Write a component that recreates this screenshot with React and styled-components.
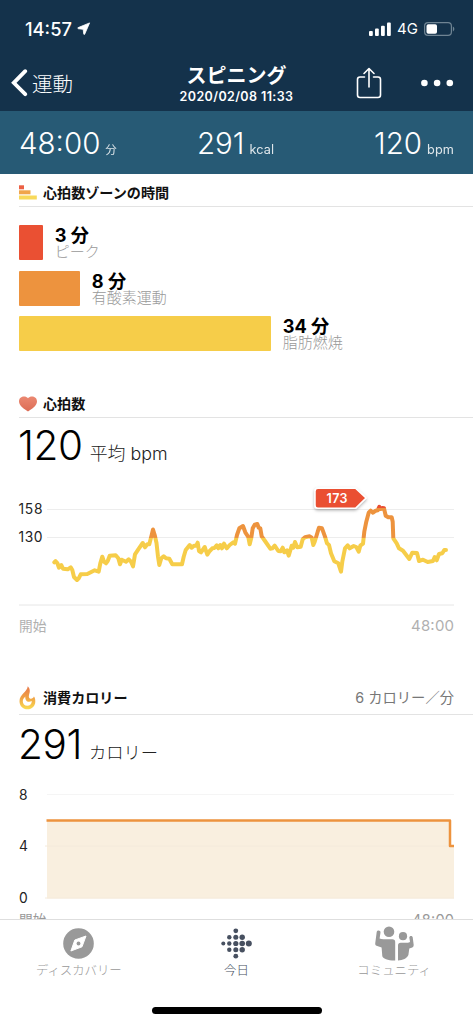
import React from "react";
import styled, { createGlobalStyle } from "styled-components";

const GlobalStyle = createGlobalStyle`
  * {
    box-sizing: border-box;
  }
  body {
    margin: 0;
    background: #fff;
    font-family: Inter, "Noto Sans CJK JP", sans-serif;
  }
`;

const Screen = styled.div`
  display: flex;
  flex-direction: column;
  width: 473px;
  height: 1024px;
  overflow: hidden;
  background: #fff;
`;

const StatusBar = styled.div`
  display: flex;
  align-items: center;
  justify-content: space-between;
  height: 58px;
  padding: 0 18px 0 25px;
  background: #14324b;
  color: #fff;
`;

const Clock = styled.div`
  display: flex;
  align-items: center;
  gap: 5px;
  font-size: 18.3px;
  font-weight: 500;
  line-height: 20px;
`;

const Signals = styled.div`
  display: flex;
  align-items: center;
  gap: 6px;
  font-size: 15px;
  font-weight: 400;
  line-height: 20px;
`;

const NavBar = styled.div`
  display: grid;
  grid-template-columns: 1fr 150px 1fr;
  height: 53px;
  padding: 0 19px 0 11px;
  background: #14324b;
  color: #fff;
`;

const Back = styled.div`
  display: flex;
  align-items: center;
  gap: 4px;
  height: 50px;
  font-size: 20.5px;
  font-weight: 300;
`;

const TitleBlock = styled.div`
  padding-left: 8px;
  text-align: center;
  white-space: nowrap;
`;

const Title = styled.div`
  padding-top: 6px;
  font-size: 20px;
  font-weight: 700;
  line-height: 25px;
`;

const Subtitle = styled.div`
  font-size: 12.5px;
  font-weight: 600;
  letter-spacing: 0.4px;
  line-height: 16px;
`;

const Actions = styled.div`
  display: flex;
  align-items: center;
  justify-content: flex-end;
  gap: 39px;
  height: 50px;
`;

const Stats = styled.div`
  display: grid;
  grid-template-columns: 178px 1fr auto;
  height: 63px;
  padding: 12px 19px 0;
  background: #275a75;
  color: #fff;
`;

const Stat = styled.div`
  display: flex;
  align-items: baseline;
  gap: 5px;
  font-size: 29.5px;
  font-weight: 350;
  line-height: 40px;
  small {
    font-size: ${(p) => p.$unitSize || 12.7}px;
    font-weight: 400;
    letter-spacing: 0.1px;
    opacity: 0.85;
  }
`;

const Content = styled.div`
  flex: 1;
  min-height: 0;
  overflow: hidden;
`;

const Section = styled.section`
  height: ${(p) => p.$height}px;
`;

const SectionHeader = styled.div`
  display: flex;
  align-items: center;
  height: ${(p) => p.$height}px;
  margin-left: 19px;
  padding: ${(p) => p.$offset || 0}px 19px 0 0;
  border-bottom: 1px solid #e3e3e3;
`;

const SectionIcon = styled.div`
  display: flex;
  width: 24px;
`;

const SectionTitle = styled.div`
  flex: 1;
  color: #111;
  font-size: 14.1px;
  font-weight: 700;
  line-height: 20px;
`;

const SectionNote = styled.div`
  color: #777;
  font-size: 14.3px;
  line-height: 20px;
`;

const Zones = styled.div`
  display: flex;
  flex-direction: column;
  gap: 10.5px;
  padding: 18px 19px 0;
`;

const Zone = styled.div`
  display: flex;
  gap: 11.5px;
  height: 35px;
`;

const ZoneBar = styled.div`
  border-radius: 1px;
`;

const ZoneMinutes = styled.div`
  color: #000;
  font-size: 18.2px;
  font-weight: 700;
  line-height: 18px;
  padding-top: 1px;
`;

const ZoneName = styled.div`
  color: #999;
  font-size: 15px;
  font-weight: 300;
  line-height: 16px;
`;

const Summary = styled.div`
  display: flex;
  align-items: baseline;
  gap: 7px;
  height: ${(p) => p.$height}px;
  padding: ${(p) => p.$offset}px 0 0 18px;
  color: #000;
  font-size: 40.5px;
  font-weight: 300;
  letter-spacing: -0.4px;
  line-height: 56px;
  span {
    color: #222;
    font-size: ${(p) => p.$unitSize}px;
    font-weight: 300;
    letter-spacing: 0;
  }
`;

const ChartSvg = styled.svg`
  display: block;
  font-family: Inter, "Noto Sans CJK JP", sans-serif;
`;

const TabBar = styled.nav`
  display: grid;
  grid-template-columns: repeat(3, 1fr);
  height: 86px;
  border-top: 1px solid #dedede;
`;

const Tab = styled.div`
  display: flex;
  flex-direction: column;
  align-items: center;
  padding-top: 5px;
  color: ${(p) => (p.$active ? "#475060" : "#999")};
  font-size: 12.4px;
  font-weight: 300;
  line-height: 18px;
`;

const TabIcon = styled.div`
  display: flex;
  align-items: center;
  height: 37px;
`;

const HomeArea = styled.div`
  display: flex;
  justify-content: center;
  height: 19px;
  padding-top: 2px;
`;

const HomeIndicator = styled.div`
  width: 170px;
  height: 7px;
  border-radius: 4px;
  background: #000;
`;

const ZONES = [
  { minutes: 3, name: "ピーク", width: 24.3, color: "#ea5033" },
  { minutes: 8, name: "有酸素運動", width: 61.3, color: "#ed933e" },
  { minutes: 34, name: "脂肪燃焼", width: 252.2, color: "#f6cd49" },
];

const HEART_RATE = [
  "54.3,77.3 55.5,76 57.3,78 59,82.7 61.3,80 63,83.7 67.7,84.3 70.7,82.3",
  "72.3,85 74,92 77,95 78.7,93.3 80.7,89.3 87.3,89 94.7,85.3 98.7,86.7",
  "100.3,78.3 102.3,71.7 104,76.7 106,78.3 107.7,76 109.7,70.7 115.7,70.3",
  "118.3,73.3 120,79.3 121.7,74.7 126,76.7 128.7,74.3 131,76.7 133,81.3",
  "135,69.3 138.3,64.3 142.7,58 145,62.3 147.3,59.3 149.3,59.3 151.7,50",
  "153,44.5 154.7,50 156.5,58 158,71.7 159.3,80 161.3,73.3 163.7,71.3",
  "166,73.3 169.3,73.7 172.3,79.3 182,79.3 183.7,71.7 185.7,65 189.7,60",
  "191.7,62.7 194,60.7 196.3,60.7 197.7,57.7 199,66 201,67.3 204.7,62",
  "207.3,69.7 209.7,66 212.3,63.3 214.3,63 216.7,60.3 218.3,63.3 220.3,60",
  "222,63.3 224,58.7 226.7,63.3 229.7,60 233.3,57.3 235,58.7 237,50",
  "239.3,43.3 243,41 245.3,47.3 248.3,52 249.7,59.3 251.3,52.7 252.7,43.3",
  "254.7,39.7 257.3,39 258.7,42.7 260.3,43.3 261.7,51.3 265,56 270.3,63.7",
  "272.3,63.3 274.7,60.7 278.3,66 280.7,66.3 282.7,62.7 284.3,67.3 287,65.3",
  "288.7,70.7 291.7,60.7 293.3,62.7 295,57 297.3,62.3 300.7,61.7 302.7,54.3",
  "305,52.3 309.7,51.3 311.7,52.7 313.3,60 314.7,56.7 317.7,46.7 319,42.7",
  "322,43.3 325,51.7 327,58.3 329,60 331,68.3 334.3,76.3 338.3,78.3 341,86.7",
  "342.3,76.7 345,63.3 347.7,60.3 349.7,63.3 353.7,61 356.3,62 358.7,66.7",
  "360.3,60.7 363,58.7 364.3,46.7 366.3,36.7 368.7,27.7 370.7,25.7 373,27.7",
  "375.7,25.7 377.7,25.3 379.3,21.8 380.7,24 382.3,22.9 384,23.3 385.7,30.7",
  "388.3,32.3 391.7,32.3 392.7,36.7 393.3,53.3 396.7,58.3 399,63.3 403,65.7",
  "409.3,74 412.3,67.7 417,68 419,76 423,74.7 427.7,77 433,76 434.7,72",
  "436.7,75.3 439,69 442.3,68.3 444.3,65 446,65",
].join(" ");

// [cx, cy, r], the dots grow towards the right
const LOGO_DOTS = [
  [2.3, 15.5, 2],
  [8.3, 9.2, 2.2],
  [8.3, 15.5, 2.2],
  [8.3, 21.8, 2.2],
  [14.8, 2.8, 2.4],
  [14.8, 9.2, 2.5],
  [14.8, 15.5, 2.6],
  [14.8, 21.8, 2.5],
  [14.8, 28.2, 2.4],
  [21.2, 9.2, 2.7],
  [21.2, 15.5, 2.8],
  [21.2, 21.8, 2.7],
  [27.8, 15.5, 3],
];

const LocationArrow = () => (
  <svg width="14" height="14" viewBox="0 0 14 14">
    <path d="M12.6.9 7.700 12.200Q7 13 6.700 11.900L6.200 7.300 1.300 6.700Q.1 6.200 1.200 5.600z" fill="#fff" stroke="#fff" strokeWidth="0.8" strokeLinejoin="round" />
  </svg>
);

const SignalIcon = () => (
  <svg width="22" height="14" viewBox="0 0 22 14" fill="#fff">
    <rect x="0" y="9" width="3.8" height="5" rx="1" />
    <rect x="6" y="6.5" width="3.8" height="7.5" rx="1" />
    <rect x="12" y="3.8" width="3.8" height="10.2" rx="1" />
    <rect x="18" y="0.5" width="3.8" height="13.5" rx="1" />
  </svg>
);

const BatteryIcon = () => (
  <svg width="31" height="14" viewBox="0 0 31 14">
    <rect x="0.6" y="0.6" width="26.8" height="12.8" rx="3.4" fill="none" stroke="#6f8493" strokeWidth="1.2" />
    <path d="M28.9 4.6c1.9.7 1.9 4.1 0 4.8z" fill="#6f8493" />
    <rect x="2.5" y="2.3" width="10.5" height="9.4" rx="1.8" fill="#fff" />
  </svg>
);

const ChevronIcon = () => (
  <svg width="17" height="28" viewBox="0 0 17 28">
    <path d="M14.2 2.2 2.8 13.8l11.4 11.4" fill="none" stroke="#fff" strokeWidth="3.8" strokeLinecap="round" />
  </svg>
);

const ShareIcon = () => (
  <svg width="26" height="32" viewBox="0 0 26 32" fill="none" stroke="#fff" strokeWidth="1.6" strokeLinecap="round" strokeLinejoin="round">
    <path d="M8.500 10H4Q1.500 10 1.500 12.500V28Q1.500 30.500 4 30.500H22Q24.500 30.500 24.500 28V12.500Q24.500 10 22 10H17.500" />
    <path d="M13 20V1.500M8 6.500 13 1.500l5 5" />
  </svg>
);

const MoreIcon = () => (
  <svg width="33" height="8" viewBox="0 0 33 8" fill="#fff">
    <circle cx="3.400" cy="4" r="3.300" />
    <circle cx="16.100" cy="4" r="3.300" />
    <circle cx="28.800" cy="4" r="3.300" />
  </svg>
);

const ZonesIcon = () => (
  <svg width="18" height="15" viewBox="0 0 18 15">
    <rect y="0.3" width="5" height="4" fill="#ec6044" />
    <rect y="5.3" width="11.5" height="4" fill="#f0a54b" />
    <rect y="10.5" width="17.8" height="4" fill="#f8d95a" />
  </svg>
);

const HeartIcon = () => (
  <svg width="18" height="16" viewBox="0 0 18 16">
    <linearGradient id="heart" x1="0" y1="0" x2="0" y2="1">
      <stop offset="0" stopColor="#eb8871" />
      <stop offset="1" stopColor="#dc6c55" />
    </linearGradient>
    <path d="M9 2.300C6.700-.6 0 0 0 5.500c0 4.400 5.500 7.500 9 10 3.500-2.500 9-5.600 9-10C18 0 11.300-.6 9 2.300z" fill="url(#heart)" />
  </svg>
);

const FlameIcon = () => (
  <svg width="17" height="24" viewBox="0 0 17 24">
    <linearGradient id="flame" x1="0" y1="0" x2="0" y2="1">
      <stop offset="0" stopColor="#e8794b" />
      <stop offset="0.5" stopColor="#f0a244" />
      <stop offset="1" stopColor="#fadd52" />
    </linearGradient>
    <path
      d="M8.800.3C8.200 6 .5 8.500.5 15.200.5 20 4 23.300 8.500 23.300s7.800-3.300 7.800-7.800c0-2.500-.5-4-1.400-5-.5 1.500-1.900 2.500-3.500 2.200-1.300-.2-1.900-1.700-1.400-3.700.8-2.500 1.800-5.700-1.200-8.700zM6.300 10.500c-.3 3 1.200 5.300 3.700 5.300 1 0 2-.3 2.800-.8 0 3-1.800 4.800-4.500 4.800-2.800 0-4.500-2-4.500-4.500 0-1.800 1-3.300 2.500-4.800z"
      fill="url(#flame)"
      fillRule="evenodd"
    />
  </svg>
);

const CompassIcon = () => (
  <svg width="31" height="31" viewBox="0 0 31 31">
    <circle cx="15.5" cy="15.5" r="15.3" fill="#999" />
    <path d="M23 8 19 18.800 7.900 23 11.800 12z" fill="#fff" stroke="#fff" strokeLinejoin="round" />
    <circle cx="15.5" cy="15.5" r="1.9" fill="#999" />
  </svg>
);

const LogoIcon = () => (
  <svg width="31" height="31" viewBox="0 0 31 31" fill="#475060">
    {LOGO_DOTS.map(([x, y, r]) => (
      <circle key={`${x}-${y}`} cx={x} cy={y} r={r} />
    ))}
  </svg>
);

const CommunityIcon = () => (
  <svg width="40" height="35" viewBox="0 0 40 35" fill="#999">
    <circle cx="15" cy="5.700" r="5.300" />
    <circle cx="29" cy="10.200" r="4.100" />
    <path d="M2.700 6C3.300 3.800 6.700 4.200 6.500 6.500L5.600 12.400Q7 13.200 9.500 13.200h8.800q2.900 0 2.900 2.800V34.500C14.500 34.700 8.600 32.500 8.300 30L7.600 21.500 2.500 19.800Q1 19.200 1.200 17.500z" />
    <path d="M24 19.500q0-2.700 2.700-2.700h5.800c2 0 3.100-.2 3.500-1l-.7-4.200c0-2.100 2.900-2.300 3.400-.4l1 7.800q.1 1.900-1.400 2.500l-3 1-.9 6.500c-1.600 3.400-5.500 5.200-10.400 5.500z" />
  </svg>
);

const HeartRateChart = () => (
  <ChartSvg width="473" height="160" viewBox="0 0 473 160">
    <defs>
      <linearGradient id="zones" gradientUnits="userSpaceOnUse" x1="0" y1="0" x2="0" y2="100">
        <stop offset="0.235" stopColor="#ea5033" />
        <stop offset="0.235" stopColor="#ed933e" />
        <stop offset="0.535" stopColor="#ed933e" />
        <stop offset="0.535" stopColor="#f6cd49" />
      </linearGradient>
      <filter id="shadow" x="-20%" y="-30%" width="140%" height="180%">
        <feDropShadow dx="0" dy="1.5" stdDeviation="1.5" floodColor="#000" floodOpacity="0.3" />
      </filter>
    </defs>
    <path d="M47 24.500H454M47 52.500H454" stroke="#ededed" />
    <path d="M19 120H454" stroke="#e6e6e6" />
    <polyline points={HEART_RATE} fill="none" stroke="url(#zones)" strokeWidth="4" strokeLinejoin="round" strokeLinecap="round" />
    <path
      d="M318 3.200H355.500L366 13 355.500 23.200H318Q315 23.200 315 20.200V6.200Q315 3.200 318 3.200z"
      fill="#ea5033"
      stroke="#fff"
      strokeWidth="1.5"
      filter="url(#shadow)"
    />
    <text x="337" y="18" fontSize="12.5" fontWeight="600" fill="#fff" textAnchor="middle" textLength="21">173</text>
    <g fontSize="13.8" fill="#222">
      <text x="18.5" y="29.3" textLength="24">158</text>
      <text x="18.5" y="57.3" textLength="24">130</text>
    </g>
    <g fontSize="15" fill="#b0b0b0">
      <text x="19" y="146" fontSize="13.7">開始</text>
      <text x="454" y="146.3" textAnchor="end" textLength="43">48:00</text>
    </g>
  </ChartSvg>
);

const CalorieChart = () => (
  <ChartSvg width="473" height="160" viewBox="0 0 473 160">
    <path d="M47 14.500H454" stroke="#f5f5f5" />
    <path d="M47 40.500H450V66H454V118.500H47z" fill="#f9efdf" />
    <path d="M45 66H454M45 118H454" stroke="#f4eadb" />
    <path d="M46.500 40.500H450V66H454" fill="none" stroke="#ed933e" strokeWidth="2.5" strokeLinejoin="round" />
    <g fontSize="13.8" fill="#222">
      <text x="19" y="20">8</text>
      <text x="19" y="71">4</text>
      <text x="19" y="123">0</text>
    </g>
    <g fontSize="14.5" fill="#999">
      <text x="19" y="145" fontSize="13.7">開始</text>
      <text x="454" y="144.5" textAnchor="end" textLength="42">48:00</text>
    </g>
  </ChartSvg>
);

export default () => {
  return (
    <>
      <GlobalStyle />
      <Screen>
        <StatusBar>
          <Clock>
            14:57 <LocationArrow />
          </Clock>
          <Signals>
            <SignalIcon />
            4G
            <BatteryIcon />
          </Signals>
        </StatusBar>
        <NavBar>
          <Back>
            <ChevronIcon />
            運動
          </Back>
          <TitleBlock>
            <Title>スピニング</Title>
            <Subtitle>2020/02/08 11:33</Subtitle>
          </TitleBlock>
          <Actions>
            <ShareIcon />
            <MoreIcon />
          </Actions>
        </NavBar>
        <Stats>
          <Stat $unitSize={11.5}>
            48:00<small>分</small>
          </Stat>
          <Stat>
            291<small>kcal</small>
          </Stat>
          <Stat>
            120<small>bpm</small>
          </Stat>
        </Stats>

        <Content>
          <Section $height={214}>
            <SectionHeader $height={33} $offset={5}>
              <SectionIcon>
                <ZonesIcon />
              </SectionIcon>
              <SectionTitle>心拍数ゾーンの時間</SectionTitle>
            </SectionHeader>
            <Zones>
              {ZONES.map(({ minutes, name, width, color }) => (
                <Zone key={name}>
                  <ZoneBar style={{ width, background: color }} />
                  <div>
                    <ZoneMinutes>{minutes} 分</ZoneMinutes>
                    <ZoneName>{name}</ZoneName>
                  </div>
                </Zone>
              ))}
            </Zones>
          </Section>

          <Section $height={293}>
            <SectionHeader $height={30} $offset={3}>
              <SectionIcon>
                <HeartIcon />
              </SectionIcon>
              <SectionTitle>心拍数</SectionTitle>
            </SectionHeader>
            <Summary $height={67} $offset={0} $unitSize={17.9}>
              120<span>平均 bpm</span>
            </Summary>
            <HeartRateChart />
          </Section>

          <Section $height={260}>
            <SectionHeader $height={34}>
              <SectionIcon>
                <FlameIcon />
              </SectionIcon>
              <SectionTitle>消費カロリー</SectionTitle>
              <SectionNote>6 カロリー／分</SectionNote>
            </SectionHeader>
            <Summary $height={65} $offset={2} $unitSize={17.3}>
              291<span>カロリー</span>
            </Summary>
            <CalorieChart />
          </Section>
        </Content>

        <TabBar>
          <Tab>
            <TabIcon>
              <CompassIcon />
            </TabIcon>
            ディスカバリー
          </Tab>
          <Tab $active>
            <TabIcon>
              <LogoIcon />
            </TabIcon>
            今日
          </Tab>
          <Tab>
            <TabIcon>
              <CommunityIcon />
            </TabIcon>
            コミュニティ
          </Tab>
        </TabBar>
        <HomeArea>
          <HomeIndicator />
        </HomeArea>
      </Screen>
    </>
  );
};
